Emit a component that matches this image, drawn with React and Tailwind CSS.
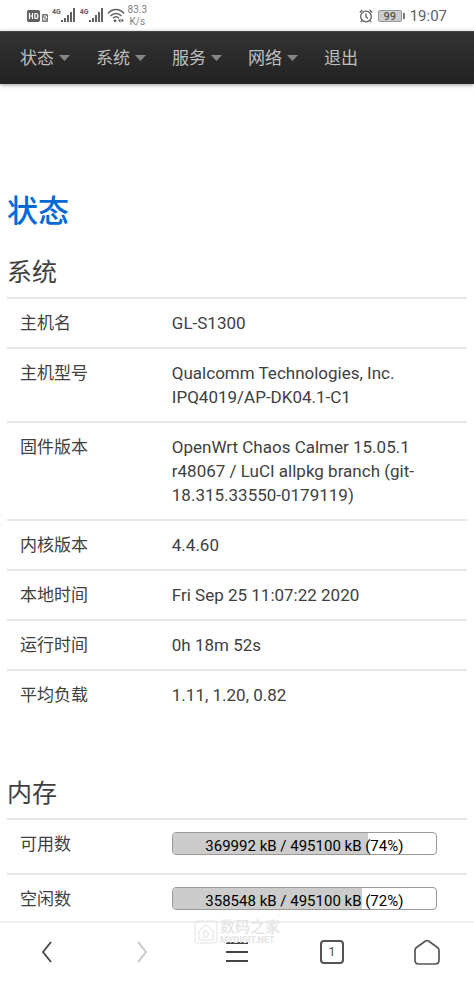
const FONT = "font-[Roboto,'Noto_Sans_CJK_SC',sans-serif]";

const MENU = [
  { label: '状态', dropdown: true },
  { label: '系统', dropdown: true },
  { label: '服务', dropdown: true },
  { label: '网络', dropdown: true },
  { label: '退出', dropdown: false },
];

const SYSTEM = [
  ['主机名', 'GL-S1300'],
  ['主机型号', 'Qualcomm Technologies, Inc. IPQ4019/AP-DK04.1-C1'],
  ['固件版本', 'OpenWrt Chaos Calmer 15.05.1 r48067 / LuCI allpkg branch (git-18.315.33550-0179119)'],
  ['内核版本', '4.4.60'],
  ['本地时间', 'Fri Sep 25 11:07:22 2020'],
  ['运行时间', '0h 18m 52s'],
  ['平均负载', '1.11, 1.20, 0.82'],
];

const MEMORY = [
  { label: '可用数', value: 369992, total: 495100 },
  { label: '空闲数', value: 358548, total: 495100 },
];

function HdIcon() {
  return (
    <svg width="22" height="14" viewBox="0 0 22 14" fill="none" stroke="#606060" aria-hidden="true">
      <rect x="0" y="1" width="13" height="12" rx="2" fill="#606060" stroke="none" />
      <path d="M2.5 4v6M5.5 4v6M2.5 7h3M8 4.5v5h1c2.600 0 2.600-5 0-5z" stroke="#fff" strokeWidth="1.200" />
      <rect x="15" y="5" width="6" height="8" rx="1" fill="#777" stroke="none" />
      <path d="M16.500 7h3v2h-3v2h3" stroke="#fff" strokeWidth="0.900" />
    </svg>
  );
}

function SignalIcon() {
  return (
    <svg width="15" height="15" viewBox="0 0 15 15" fill="#606060" aria-hidden="true">
      <rect x="0" y="12" width="2" height="2" />
      <rect x="3" y="10" width="2" height="4" />
      <rect x="6" y="7" width="2" height="7" />
      <rect x="9" y="4" width="2" height="10" />
      <rect x="12" y="0" width="2" height="14" />
    </svg>
  );
}

function Signal() {
  return (
    <span className="flex items-start">
      <span className="text-[7px] leading-[8px] font-bold">4G</span>
      <SignalIcon />
    </span>
  );
}

function WifiIcon() {
  return (
    <svg width="18" height="15" viewBox="0 0 18 15" fill="none" stroke="#606060" strokeWidth="1.500" aria-hidden="true">
      <path d="M1 5.500C5.500 0.300 12.500 0.300 17 5.500M3.500 8c3.200-3.500 7.800-3.500 11 0M6 10.300c2-2 4-2 6 0" />
      <circle cx="8" cy="12.800" r="1.400" fill="#606060" stroke="none" />
      <path d="M13.500 10.500L11 12.500l2.500 2zM14.500 10.500l2.500 2-2.500 2z" fill="#606060" stroke="none" />
    </svg>
  );
}

function AlarmIcon() {
  return (
    <svg width="14" height="14" viewBox="0 0 14 14" fill="none" stroke="#606060" strokeWidth="1.300" aria-hidden="true">
      <circle cx="7" cy="7.500" r="5.300" />
      <path d="M7 4.500v3.300l2 1.600M0.800 3.400L3.400 1M13.200 3.400L10.600 1M3 11.500l-1.200 1.700M11 11.500l1.200 1.700" />
    </svg>
  );
}

function Battery() {
  return (
    <span className="flex items-center gap-px">
      <span className="w-6 h-3 rounded-[2px] border border-[#999] bg-[#ccc] text-[11px] leading-[11px] text-center text-[#555] font-medium">
        99
      </span>
      <span className="w-[2px] h-[6px] bg-[#777]" />
    </span>
  );
}

function StatusBar() {
  return (
    <div className="h-[31px] px-[27px] flex items-center justify-between text-[#606060]">
      <div className="flex items-center gap-[3px]">
        <HdIcon />
        <div className="flex items-center gap-1">
          <Signal />
          <Signal />
        </div>
        <WifiIcon />
        <span className="text-[10px] leading-3 text-center text-[#808080]">
          83.3<br />K/s
        </span>
      </div>
      <div className="flex items-center gap-[5px]">
        <AlarmIcon />
        <Battery />
        <span className="text-[15px] leading-5">19:07</span>
      </div>
    </div>
  );
}

function Nav() {
  return (
    <nav className="h-[53px] px-5 flex items-center gap-[26px] bg-linear-to-b from-[#333] to-[#222] border-t border-[#444] shadow-[0_1px_4px_rgba(0,0,0,0.4)]">
      {MENU.map(item => (
        <a key={item.label} href="#" className="flex items-center gap-1 text-[17px] leading-6 text-[#bfbfbf]">
          {item.label}
          {item.dropdown && (
            <svg className="ml-px" width="11" height="6" viewBox="0 0 11 6" fill="#858585" aria-hidden="true">
              <path d="M0 0h11L5.500 6z" />
            </svg>
          )}
        </a>
      ))}
    </nav>
  );
}

function Section({ title, children }) {
  return (
    <section className="mb-[49px]">
      <h2 className="h-[50px] text-[25px] leading-[52px] text-[#404040]">{title}</h2>
      <table className="w-full table-fixed text-[17px] leading-6 text-[#404040]">
        <tbody>{children}</tbody>
      </table>
    </section>
  );
}

function Row({ label, children }) {
  return (
    <tr className="border-t-2 border-[#e6e6e6]">
      <th scope="row" className="w-[33%] px-[13px] py-3 text-left align-top font-normal">{label}</th>
      <td className="pl-[13px] pr-[30px] py-3 align-top">{children}</td>
    </tr>
  );
}

function UsageBar({ value, total }) {
  const percent = Math.floor((value / total) * 100);
  return (
    <div className="relative h-[23px] mb-[6px] rounded-[4px] border border-[#999] text-black">
      <div className="h-full rounded-l-[3px] bg-[#ccc]" style={{ width: `${percent}%` }} />
      <div className="absolute inset-x-0 top-px text-[15px] leading-6 text-center">
        {value} kB / {total} kB ({percent}%)
      </div>
    </div>
  );
}

function Watermark() {
  return (
    <div className="absolute left-1/2 top-0 -translate-x-[43px] -translate-y-1 flex items-center gap-[2px] pointer-events-none">
      <svg width="24" height="24" viewBox="0 0 24 24" fill="none" stroke="#e2e2e2" aria-hidden="true">
        <rect x="1" y="1" width="22" height="22" rx="2" />
        <path d="M5 11l7-6 7 6v9H5zM10 17v-6h2c3 0 3 6 0 6z" />
      </svg>
      <span className="flex flex-col text-[#e4e4e4]">
        <span className="text-[15px] leading-[17px] font-medium">数码之家</span>
        <span className="text-[9px] leading-[9px] font-bold">MYDIGIT.NET</span>
      </span>
    </div>
  );
}

function Toolbar() {
  const button = 'flex-1 h-full flex items-center justify-center';
  return (
    <div className="relative shrink-0 h-[63px] pb-[3px] border-t-2 border-[#f0f0f0] bg-white flex items-center">
      <button className={button} aria-label="后退">
        <svg width="10" height="22" viewBox="0 0 10 22" fill="none" stroke="#444" strokeWidth="1.800">
          <path d="M9 1L1 11l8 10" />
        </svg>
      </button>
      <button className={button} aria-label="前进">
        <svg width="10" height="22" viewBox="0 0 10 22" fill="none" stroke="#c4c4c4" strokeWidth="1.800">
          <path d="M1 1l8 10-8 10" />
        </svg>
      </button>
      <button className={button} aria-label="菜单">
        <svg width="22" height="22" viewBox="0 0 22 22" stroke="#444" strokeWidth="2">
          <path d="M0 2h22M0 11h22M0 20h22" />
        </svg>
      </button>
      <button className={button} aria-label="标签页">
        <span className="w-6 h-6 rounded-[4px] border-2 border-[#555] text-[13px] leading-5 text-[#555]">1</span>
      </button>
      <button className={button} aria-label="主页">
        <svg width="26" height="26" viewBox="0 0 26 26" fill="none" stroke="#555" strokeWidth="1.700">
          <path d="M1 11.500Q1 9.500 2.500 8.500L11.500 2Q13 1 14.500 2L23.500 8.500Q25 9.500 25 11.500V21Q25 25 21 25H5Q1 25 1 21Z" />
        </svg>
      </button>
      <Watermark />
    </div>
  );
}

export default function App() {
  return (
    <div className={`h-screen flex flex-col bg-white ${FONT}`}>
      <header className="shrink-0">
        <StatusBar />
        <Nav />
      </header>
      <main className="flex-1 min-h-0 overflow-hidden px-[7px] pt-[106px]">
        <h1 className="h-[57px] text-[31px] leading-[44px] font-medium text-[#0069d6]">状态</h1>
        <Section title="系统">
          {SYSTEM.map(([label, value]) => (
            <Row key={label} label={label}>{value}</Row>
          ))}
        </Section>
        <Section title="内存">
          {MEMORY.map(m => (
            <Row key={m.label} label={m.label}>
              <UsageBar value={m.value} total={m.total} />
            </Row>
          ))}
        </Section>
      </main>
      <Toolbar />
    </div>
  );
}
